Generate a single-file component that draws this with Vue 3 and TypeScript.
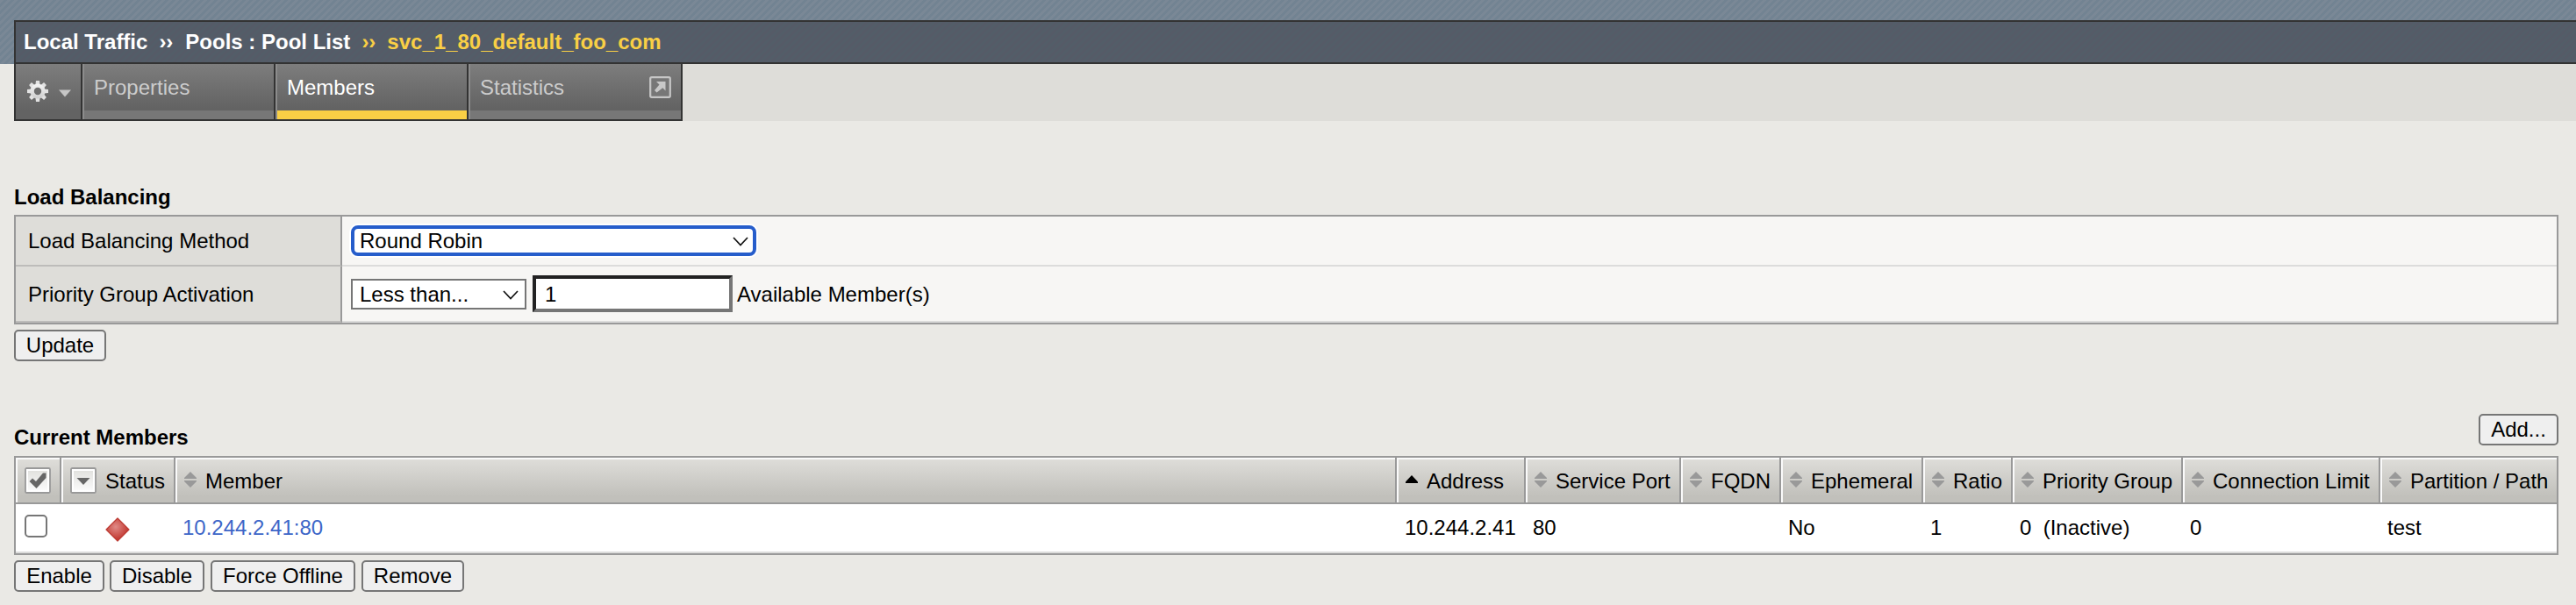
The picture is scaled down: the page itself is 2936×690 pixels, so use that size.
<script setup lang="ts">
interface Column {
  key: string
  label: string
  sort: 'none' | 'both' | 'asc'
  value: string
}

const columns: Column[] = [
  { key: 'member', label: 'Member', sort: 'both', value: '10.244.2.41:80' },
  { key: 'address', label: 'Address', sort: 'asc', value: '10.244.2.41' },
  { key: 'port', label: 'Service Port', sort: 'both', value: '80' },
  { key: 'fqdn', label: 'FQDN', sort: 'both', value: '' },
  { key: 'ephemeral', label: 'Ephemeral', sort: 'both', value: 'No' },
  { key: 'ratio', label: 'Ratio', sort: 'both', value: '1' },
  { key: 'group', label: 'Priority Group', sort: 'both', value: '0\u00a0 (Inactive)' },
  { key: 'limit', label: 'Connection Limit', sort: 'both', value: '0' },
  { key: 'path', label: 'Partition / Path', sort: 'both', value: 'test' },
]

const actions: { label: string; width: string }[] = [
  { label: 'Enable', width: 'w-enable' },
  { label: 'Disable', width: 'w-disable' },
  { label: 'Force Offline', width: 'w-offline' },
  { label: 'Remove', width: 'w-remove' },
]

const teeth = [0, 45, 90, 135, 180, 225, 270, 315]
</script>

<template>
  <div class="page">
    <header class="band">
      <nav class="crumbs">
        <span>Local Traffic</span><span class="sep wide">››</span><span>Pools : Pool List</span><span class="sep gold">››</span><span class="gold">svc_1_80_default_foo_com</span>
      </nav>
    </header>

    <div class="tabbar">
      <div class="tabs">
        <div class="tab gear">
          <svg width="26" height="26" viewBox="-13 -13 26 26">
            <defs>
              <linearGradient id="gearFill" x1="0" y1="-12" x2="0" y2="12" gradientUnits="userSpaceOnUse">
                <stop offset="0" stop-color="#fff" /><stop offset="1" stop-color="#c4c4c4" />
              </linearGradient>
            </defs>
            <g fill="#e2e2e2">
              <path v-for="a in teeth" :key="a" d="M-2.6 -7L-2 -12H2L2.6 -7Z" :transform="`rotate(${a})`" />
            </g>
            <circle r="6.4" fill="none" stroke="url(#gearFill)" stroke-width="4.4" />
          </svg>
          <svg class="drop" width="14" height="9" viewBox="0 0 14 9"><path d="M0 0.5H14L7 8.5Z" fill="#c6c6c6" /></svg>
        </div>
        <div class="tab t1"><span>Properties</span></div>
        <div class="tab t1 active"><span>Members</span></div>
        <div class="tab t2">
          <span>Statistics</span>
          <svg width="25" height="25" viewBox="0 0 25 25">
            <rect x="1.2" y="1.2" width="22.6" height="22.6" rx="1.5" fill="#777" stroke="#c6c6c6" stroke-width="2.2" />
            <path d="M8 6H18.500V16.500L15.300 13.300L8.500 18.500L6 16L11.500 9.500Z" fill="#c8c8c8" />
          </svg>
        </div>
      </div>
    </div>

    <main>
      <h2 class="title first">Load Balancing</h2>
      <section class="form">
        <div class="label r1">Load Balancing Method</div>
        <div class="field r1">
          <div class="select focus"><span>Round Robin</span>
            <svg width="18" height="11" viewBox="0 0 18 11"><path d="M1 1L9 9.500L17 1" fill="none" stroke="#111" stroke-width="1.700" /></svg>
          </div>
        </div>
        <div class="label r2">Priority Group Activation</div>
        <div class="field r2">
          <div class="select small"><span>Less than...</span>
            <svg width="18" height="11" viewBox="0 0 18 11"><path d="M1 1L9 9.500L17 1" fill="none" stroke="#111" stroke-width="1.700" /></svg>
          </div>
          <div class="input">1</div>
          <span class="after">Available Member(s)</span>
        </div>
      </section>
      <div class="btn w-update">Update</div>

      <div class="heading">
        <h2 class="title">Current Members</h2>
        <div class="btn w-add">Add...</div>
      </div>
      <section class="grid">
        <div class="th box">
          <svg width="30" height="30" viewBox="0 0 30 30">
            <defs>
              <linearGradient id="boxFill" x1="0" y1="0" x2="0" y2="1">
                <stop offset="0" stop-color="#e2e2df" /><stop offset="1" stop-color="#fafafa" />
              </linearGradient>
            </defs>
            <rect x="1" y="1" width="28" height="28" rx="1.500" fill="#fff" stroke="#999" stroke-width="1.800" />
            <rect x="4" y="4" width="22" height="22" fill="url(#boxFill)" />
            <path d="M5.500 16L9 12.500L13 16L21 6.500H24.500V12L13.500 24Z" fill="#666" />
          </svg>
        </div>
        <div class="th status">
          <svg width="30" height="30" viewBox="0 0 30 30">
            <rect x="1" y="1" width="28" height="28" rx="1.500" fill="#fff" stroke="#999" stroke-width="1.800" />
            <rect x="4" y="4" width="22" height="22" fill="url(#boxFill)" />
            <path d="M7.500 12H22.500L15 20Z" fill="#666" />
          </svg>
          <span>Status</span>
        </div>
        <div v-for="c in columns" :key="c.key" class="th">
          <svg class="sort" width="14" height="18" viewBox="0 0 14 18">
            <path v-if="c.sort === 'asc'" d="M7 4L14 11.500V13H0V11.500Z" fill="#000" />
            <path v-else d="M7 0L14 7V8H0V7ZM0 10H14V11L7 18L0 11Z" fill="#999" />
          </svg>
          <span>{{ c.label }}</span>
        </div>

        <div class="td pick"><i class="check"></i></div>
        <div class="td light">
          <svg width="28" height="28" viewBox="0 0 28 28">
            <defs>
              <radialGradient id="redFill" cx="0.42" cy="0.38" r="0.55">
                <stop offset="0" stop-color="#e08a86" /><stop offset="1" stop-color="#c23a33" />
              </radialGradient>
            </defs>
            <path d="M14 1L27 14L14 27L1 14Z" fill="url(#redFill)" stroke="#bd3c34" stroke-width="1.200" stroke-linejoin="round" />
          </svg>
        </div>
        <div v-for="c in columns" :key="c.key" class="td" :class="c.key">{{ c.value }}</div>
      </section>
      <div class="actions">
        <div v-for="b in actions" :key="b.label" class="btn" :class="b.width">{{ b.label }}</div>
      </div>
    </main>
  </div>
</template>

<style>
body {
  margin: 0;
  background: #eae9e5;
}
</style>

<style scoped>
.page {
  width: 2936px;
  height: 690px;
  overflow: hidden;
  background: #eae9e5;
  color: #000;
  font: 24px/28px 'Liberation Sans', Arial, sans-serif;
  white-space: nowrap;
}
.page *,
.page {
  box-sizing: border-box;
}
svg {
  display: block;
  flex: none;
}
.band {
  height: 73px;
  padding: 23px 0 0 16px;
  background: repeating-linear-gradient(135deg, #7a8896 0 2.83px, #728392 2.83px 5.66px);
}
.crumbs {
  display: flex;
  height: 50px;
  padding: 9px 0 0 9px;
  border: 2px solid #333;
  border-right: 0;
  background: repeating-linear-gradient(135deg, #555b67 0 2.83px, #535d68 2.83px 5.66px);
  color: #fff;
  font-weight: bold;
}
.sep {
  margin: 0 13px;
}
.wide {
  margin-right: 14px;
}
.gold {
  color: #f9cf45;
}
.tabbar {
  height: 65px;
  margin-left: 16px;
  background: #deddd9;
}
.tabs {
  display: flex;
  width: 762px;
  height: 65px;
  border: solid #333;
  border-width: 0 2px 2px;
}
.tab {
  display: flex;
  border-right: 2px solid #333;
  background: linear-gradient(#7d7d7d, #636363 52px);
  color: #ccc;
}
.tab:last-child {
  border-right: 0;
}
.t1,
.t2 {
  width: 220px;
  padding: 13px 0 0 11px;
  border-left: 2px solid #8c8c8c;
  background: linear-gradient(#777, #777) 0 53px / 100% 10px no-repeat, linear-gradient(#7d7d7d, #636363 50px);
}
.t2 {
  width: 242px;
  justify-content: space-between;
  padding-right: 11px;
}
.t2 svg {
  margin-top: 1px;
}
.active {
  background: linear-gradient(#f9cf45, #f9cf45) 0 53px / 100% 10px no-repeat, linear-gradient(#7d7d7d, #636363 50px);
  color: #fff;
}
.gear {
  width: 76px;
  padding: 18px 0 0 12px;
}
.drop {
  margin: 11px 0 0 11px;
}
main {
  padding: 0 20px 0 16px;
}
.title {
  margin: 0;
  font: bold 24px/28px 'Liberation Sans', Arial, sans-serif;
}
.first {
  height: 34px;
  margin-top: 73px;
}
.form {
  display: grid;
  grid-template-columns: 372px 1fr;
  border: 2px solid #999;
}
.label {
  padding-left: 14px;
  border-right: 2px solid #999;
  border-bottom: 2px solid #bdbcba;
  background: #deddd9;
}
.field {
  display: flex;
  align-items: flex-start;
  padding-left: 10px;
  border-bottom: 2px solid #dcdcdb;
  background: #f7f6f4;
}
.r1 {
  height: 57px;
}
.r2 {
  height: 64px;
}
.label.r1 {
  padding-top: 14px;
}
.label.r2 {
  padding-top: 18px;
}
.field.r1 {
  padding-top: 10px;
}
.field.r2 {
  padding-top: 10px;
}
.select {
  display: flex;
  justify-content: space-between;
  height: 35px;
  border: 2px solid #767676;
  background: #fff;
}
.focus {
  width: 462px;
  padding: 0 5px 0 6px;
  border: 4px solid #265dcb;
  border-radius: 8px;
  box-shadow: 0 0 0 2px #fff;
}
.focus svg {
  margin-top: 9px;
}
.small {
  width: 200px;
  margin-top: 4px;
  padding: 2px 7px 0 8px;
}
.small svg {
  margin-top: 9px;
}
.input {
  width: 228px;
  height: 42px;
  margin-left: 7px;
  padding: 4px 0 0 10px;
  border: 4px solid;
  border-color: #222 #767676 #767676 #222;
  background: #fff;
}
.after {
  margin: 8px 0 0 5px;
}
.btn {
  height: 36px;
  padding-top: 2px;
  border: 2px solid #767676;
  border-radius: 5px;
  background: #efefef;
  text-align: center;
}
.w-update {
  width: 105px;
  margin-top: 6px;
}
.w-add {
  width: 91px;
}
.w-enable {
  width: 103px;
  margin-right: -1px;
}
.w-disable {
  width: 108px;
}
.w-offline {
  width: 165px;
}
.w-remove {
  width: 117px;
}
.heading {
  display: flex;
  justify-content: space-between;
  height: 48px;
  margin-top: 60px;
}
.heading .title {
  margin-top: 13px;
}
.grid {
  display: grid;
  grid-template-columns: 52px 130px 1392px 147px 177px 114px 162px 102px 194px 225px 201px;
  grid-template-rows: 53px 56px;
  border: 2px solid #999;
}
.th {
  display: flex;
  padding: 11px 0 0 8px;
  border-right: 2px solid #999;
  border-bottom: 2px solid #999;
  background: linear-gradient(#dfdeda, #c1c0bb 44px);
  box-shadow: inset 2px 2px 0 #fafafa;
}
.th:nth-child(11) {
  border-right: 0;
}
.th span {
  margin: 2px 0 0 10px;
}
.sort {
  margin: 5px 0 0 2px;
}
.box,
.status {
  padding-left: 10px;
}
.td {
  padding: 13px 0 0 8px;
  border-bottom: 2px solid #dcdcdb;
  background: #fff;
}
.pick {
  padding: 12px 0 0 10px;
}
.check {
  display: block;
  width: 26px;
  height: 26px;
  border: 2px solid #767676;
  border-radius: 5px;
}
.light {
  padding: 15px 0 0 50px;
}
.member {
  color: #3d66c8;
}
.address {
  padding-left: 9px;
}
.actions {
  display: flex;
  gap: 7px;
  margin-top: 6px;
}
</style>
